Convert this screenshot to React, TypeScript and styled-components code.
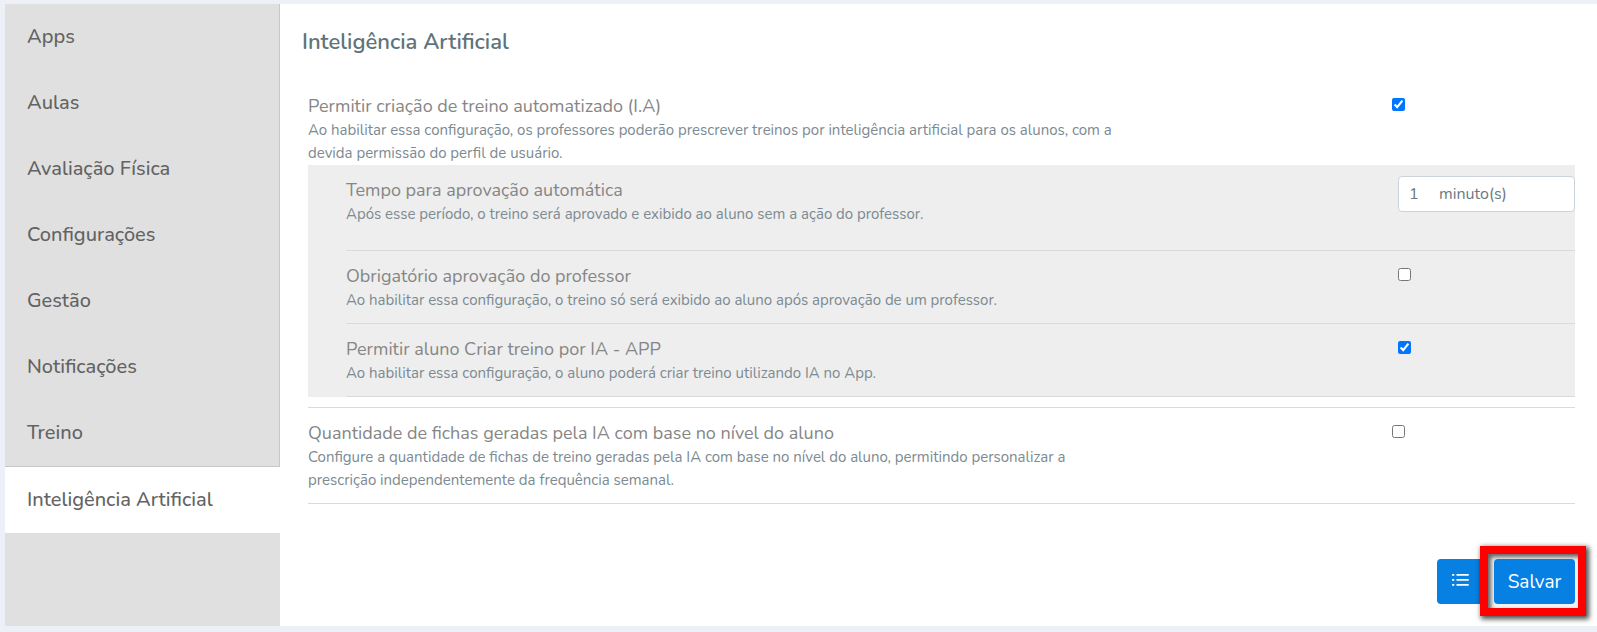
import React, { useState } from "react";
import styled, { createGlobalStyle } from "styled-components";

const GlobalStyle = createGlobalStyle`
  *, *::before, *::after { box-sizing: border-box; }
  body {
    margin: 0;
    background: #edf1f7;
    font-family: Nunito, "Open Sans", sans-serif;
    color: #868686;
  }
  button, input { font: inherit; }
`;

const Page = styled.div`
  display: flex;
  flex-direction: column;
  min-height: 100vh;
  padding: 4px 0 6px 5px;
`;

const Panel = styled.div`
  display: flex;
  flex: 1;
  background: #fff;
`;

const Sidebar = styled.nav`
  flex: 0 0 275px;
  background: #e0e0e0;
`;

const SidebarLink = styled.a<{ $active: boolean }>`
  display: flex;
  align-items: center;
  height: ${(p) => (p.$active ? 67 : 66)}px;
  padding: 0 22px 2px;
  border-top: ${(p) => (p.$active ? "1px solid #c8c8c8" : "none")};
  border-right: ${(p) => (p.$active ? "none" : "1px solid #c8c8c8")};
  background: ${(p) => (p.$active ? "#fff" : "transparent")};
  color: #636363;
  font-size: 20px;
  font-weight: 500;
  text-decoration: none;
`;

const Content = styled.main`
  flex: 1;
  min-width: 0;
  padding: 23px 22px 22px;
`;

const Title = styled.h1`
  margin: 0 0 24px;
  color: #60737b;
  font-size: 22px;
  font-weight: 600;
  line-height: 30px;
`;

const Settings = styled.div`
  padding-left: 6px;
`;

const Group = styled.section`
  padding-bottom: 10px;
  border-bottom: 1px solid #dadada;
`;

const NestedGroup = styled.div`
  padding-left: 38px;
  background: #eee;
`;

const Row = styled.div<{ $control: number; $tall?: boolean; $plain?: boolean }>`
  display: grid;
  grid-template-columns: minmax(0, 1fr) ${(p) => p.$control}px;
  align-items: start;
  min-height: ${(p) => (p.$tall ? 86 : 0)}px;
  padding: 11px 0 ${(p) => (p.$plain ? 0 : 11)}px;
  border-bottom: ${(p) => (p.$plain ? "none" : "1px solid #dadada")};
`;

const RowText = styled.div`
  max-width: 816px;
  padding-top: 2px;
`;

const RowLabel = styled.label`
  display: block;
  margin-bottom: 1px;
  color: #868686;
  font-size: 18px;
  font-weight: 400;
  line-height: 24px;
`;

const RowDescription = styled.p`
  margin: 0;
  color: #7c8a92;
  font-size: 15px;
  font-weight: 400;
  line-height: 23px;
`;

const CheckCell = styled.div`
  display: flex;
  align-items: center;
  height: 24px;
`;

const Checkbox = styled.input`
  width: 13px;
  height: 13px;
  margin: 0;
`;

const MinutesField = styled.div`
  display: flex;
  align-items: center;
  height: 36px;
  padding: 0 10px;
  border: 1px solid #ccd3db;
  border-radius: 4px;
  background: #fff;
  color: #6a7880;
  font-size: 16px;
`;

const MinutesInput = styled.input`
  width: 30px;
  padding: 0;
  border: none;
  outline: none;
  background: transparent;
  color: inherit;
`;

const Footer = styled.div`
  display: flex;
  justify-content: flex-end;
  gap: 10px;
  margin-top: 55px;
`;

const ActionButton = styled.button<{ $width: number }>`
  position: relative;
  display: flex;
  align-items: center;
  justify-content: center;
  width: ${(p) => p.$width}px;
  height: 45px;
  padding: 0;
  border: none;
  border-radius: 4px;
  background: #0681e3;
  color: #fff;
  font-size: 19px;
  cursor: pointer;

  svg {
    margin-bottom: 3px;
  }
`;

const Highlight = styled.div`
  position: relative;

  &::before {
    content: "";
    position: absolute;
    inset: -13px -11px -12px -14px;
    border: 8px solid #fe0000;
    background: #f2f2f2;
    box-shadow: 2px 2px 5px 1px rgba(0, 0, 0, 0.7), inset 3px 3px 4px 0 rgba(0, 0, 0, 0.6);
    pointer-events: none;
  }
`;

function ListIcon() {
  return (
    <svg width="17" height="12" viewBox="0 0 17 12" fill="#fff" aria-hidden="true">
      {[0, 5, 10].map((y) => (
        <g key={y}>
          <rect x="0" y={y} width="2.4" height="1.8" rx="0.6" />
          <rect x="4.4" y={y} width="12.4" height="1.8" rx="0.6" />
        </g>
      ))}
    </svg>
  );
}

type CheckRowProps = {
  id: string;
  label: string;
  description: string;
  initial: boolean;
  control: number;
  plain?: boolean;
};

function CheckRow({ id, label, description, initial, control, plain }: CheckRowProps) {
  const [checked, setChecked] = useState(initial);
  return (
    <Row $control={control} $plain={plain}>
      <RowText>
        <RowLabel htmlFor={id}>{label}</RowLabel>
        <RowDescription>{description}</RowDescription>
      </RowText>
      <CheckCell>
        <Checkbox id={id} type="checkbox" checked={checked} onChange={(e) => setChecked(e.target.checked)} />
      </CheckCell>
    </Row>
  );
}

const sections = [
  "Apps",
  "Aulas",
  "Avaliação Física",
  "Configurações",
  "Gestão",
  "Notificações",
  "Treino",
  "Inteligência Artificial",
];

const OUTER_CONTROL = 183;
const NESTED_CONTROL = 177;

export default function App() {
  const [active, setActive] = useState("Inteligência Artificial");
  const [minutes, setMinutes] = useState("1");

  return (
    <Page>
      <GlobalStyle />
      <Panel>
        <Sidebar>
          {sections.map((name) => (
            <SidebarLink key={name} href="#" $active={name === active} onClick={() => setActive(name)}>
              {name}
            </SidebarLink>
          ))}
        </Sidebar>
        <Content>
          <Title>Inteligência Artificial</Title>
          <Settings>
            <Group>
              <CheckRow
                id="allow-ai"
                label="Permitir criação de treino automatizado (I.A)"
                description="Ao habilitar essa configuração, os professores poderão prescrever treinos por inteligência artificial para os alunos, com a devida permissão do perfil de usuário."
                initial={true}
                control={OUTER_CONTROL}
                plain
              />
              <NestedGroup>
                <Row $control={NESTED_CONTROL} $tall>
                  <RowText>
                    <RowLabel htmlFor="approval-time">Tempo para aprovação automática</RowLabel>
                    <RowDescription>
                      Após esse período, o treino será aprovado e exibido ao aluno sem a ação do professor.
                    </RowDescription>
                  </RowText>
                  <MinutesField>
                    <MinutesInput
                      id="approval-time"
                      inputMode="numeric"
                      value={minutes}
                      onChange={(e) => setMinutes(e.target.value)}
                    />
                    <span>minuto(s)</span>
                  </MinutesField>
                </Row>
                <CheckRow
                  id="teacher-approval"
                  label="Obrigatório aprovação do professor"
                  description="Ao habilitar essa configuração, o treino só será exibido ao aluno após aprovação de um professor."
                  initial={false}
                  control={NESTED_CONTROL}
                />
                <CheckRow
                  id="student-app"
                  label="Permitir aluno Criar treino por IA - APP"
                  description="Ao habilitar essa configuração, o aluno poderá criar treino utilizando IA no App."
                  initial={true}
                  control={NESTED_CONTROL}
                />
              </NestedGroup>
            </Group>
            <CheckRow
              id="sheet-amount"
              label="Quantidade de fichas geradas pela IA com base no nível do aluno"
              description="Configure a quantidade de fichas de treino geradas pela IA com base no nível do aluno, permitindo personalizar a prescrição independentemente da frequência semanal."
              initial={false}
              control={OUTER_CONTROL}
            />
          </Settings>
          <Footer>
            <ActionButton type="button" $width={47} aria-label="Histórico">
              <ListIcon />
            </ActionButton>
            <Highlight>
              <ActionButton type="button" $width={81}>
                Salvar
              </ActionButton>
            </Highlight>
          </Footer>
        </Content>
      </Panel>
    </Page>
  );
}
